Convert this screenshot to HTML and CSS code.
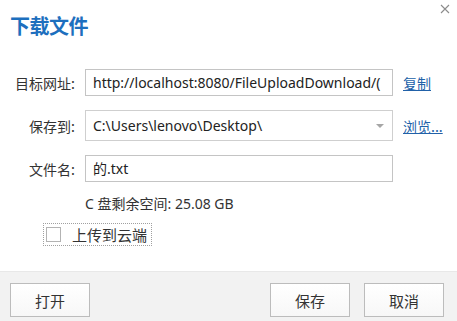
FILE: index.html
```html
<!DOCTYPE html>
<html lang="zh-CN">
<head>
<meta charset="utf-8">
<title>下载文件</title>
<link rel="stylesheet" href="styles.css">
</head>
<body>
<div class="dialog">
  <header class="head">
    <h1 class="title">下载文件</h1>
    <svg class="close" width="10" height="10" viewBox="0 0 10 10"><path d="M1 1L9 9M9 1L1 9" stroke="#8c8c8c" stroke-width="1.1" fill="none"/></svg>
  </header>
  <main class="body">
    <div class="fields">
      <span class="label">目标网址:</span>
      <div class="field url"><span class="value">http://localhost:8080/FileUploadDownload/(</span></div>
      <a class="link" href="#">复制</a>

      <span class="label">保存到:</span>
      <div class="field select"><span class="value">C:\Users\lenovo\Desktop\</span><span class="caret"></span></div>
      <a class="link" href="#">浏览...</a>

      <span class="label">文件名:</span>
      <div class="field name"><span class="value">的.txt</span></div>
      <span></span>
    </div>
    <p class="space">C 盘剩余空间: 25.08 GB</p>
    <label class="check"><span class="box"></span><span class="check-text">上传到云端</span></label>
  </main>
  <footer class="foot">
    <button class="btn">打开</button>
    <div class="actions">
      <button class="btn">保存</button>
      <button class="btn">取消</button>
    </div>
  </footer>
</div>
</body>
</html>
```

FILE: styles.css
```css
* { box-sizing: border-box; }
html, body { margin: 0; padding: 0; background: #fff; }
body {
  font-family: "Noto Sans", "Noto Sans CJK SC", sans-serif;
  font-size: 14px;
  color: #333;
  width: 457px;
  height: 321px;
  overflow: hidden;
}
.dialog { display: flex; flex-direction: column; height: 321px; }
.head {
  display: flex;
  justify-content: space-between;
  align-items: flex-start;
  padding: 4px 7px 0 10px;
  height: 69px;
}
.title {
  margin: 8px 0 0 0;
  font-family: "Noto Sans CJK SC", sans-serif;
  font-size: 20px;
  line-height: 28px;
  font-weight: 700;
  color: #1d6fbe;
  letter-spacing: -0.5px;
}
.close { display: block; }
.body { flex: 1; }
.fields {
  display: grid;
  grid-template-columns: 75px 308px auto;
  column-gap: 10px;
  row-gap: 14px;
  align-items: center;
}
.label {
  text-align: right;
  font-family: "Noto Sans CJK SC", sans-serif;
  font-size: 14px;
  line-height: 20px;
  color: #333;
}
.field {
  position: relative;
  height: 27px;
  border: 1px solid #c4c4c4;
  background: #fff;
  padding: 0 4px 0 7px;
  display: flex;
  align-items: center;
  overflow: hidden;
  white-space: nowrap;
}
.field.select { height: 31px; border-color: #cfcfcf; }
.value {
  flex: 1;
  min-width: 0;
  font-family: "Noto Sans", "Noto Sans CJK SC", sans-serif;
  font-size: 14px;
  line-height: 20px;
  color: #222;
  overflow: hidden;
  text-overflow: clip;
}
.caret {
  position: absolute;
  right: 8px;
  top: 13px;
  width: 0; height: 0;
  border-left: 4px solid transparent;
  border-right: 4px solid transparent;
  border-top: 4px solid #a6a6a6;
}
.link {
  font-family: "Noto Sans CJK SC", sans-serif;
  font-size: 14px;
  line-height: 18px;
  color: #2161a8;
  text-decoration: underline;
}
.space {
  margin: 12px 0 0 85px;
  font-family: "Noto Sans", "Noto Sans CJK SC", sans-serif;
  font-size: 14px;
  line-height: 20px;
  color: #333;
}
.check {
  display: inline-flex;
  align-items: center;
  gap: 11px;
  margin: 9px 0 0 43px;
  padding: 0 4px 0 2px;
  height: 23px;
  border: 1px dotted #a0a0a0;
}
.box {
  width: 15px; height: 15px;
  border: 1px solid #b3b3b3;
  background: #fff;
}
.check-text {
  font-family: "Noto Sans CJK SC", sans-serif;
  font-size: 15px;
  line-height: 20px;
  color: #333;
}
.foot {
  height: 50px;
  background: #f2f2f2;
  border-top: 1px solid #e8e8e8;
  display: flex;
  justify-content: space-between;
  align-items: flex-start;
  padding: 11px 13px 0 10px;
}
.actions { display: flex; gap: 14px; }
.btn {
  width: 80px;
  height: 34px;
  border: 1px solid #bcbcbc;
  background: linear-gradient(#ffffff, #f7f7f7);
  font-family: "Noto Sans CJK SC", sans-serif;
  font-size: 15px;
  color: #333;
  padding: 0;
  border-radius: 0;
}
```
